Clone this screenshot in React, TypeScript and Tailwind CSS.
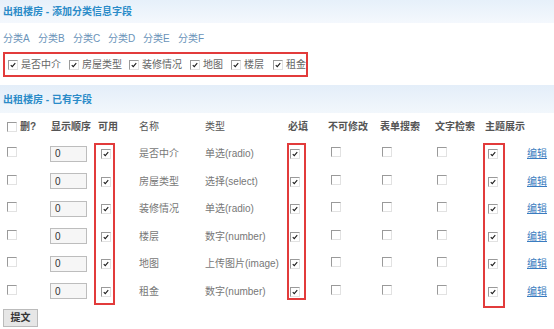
import React from 'react';

const FONT = { fontFamily: '"Liberation Sans", "Noto Sans CJK SC", sans-serif' };

const categories = ['分类A', '分类B', '分类C', '分类D', '分类E', '分类F'];
const addFields = ['是否中介', '房屋类型', '装修情况', '地图', '楼层', '租金'];

const rows = [
  { name: '是否中介', type: '单选(radio)' },
  { name: '房屋类型', type: '选择(select)' },
  { name: '装修情况', type: '单选(radio)' },
  { name: '楼层', type: '数字(number)' },
  { name: '地图', type: '上传图片(image)' },
  { name: '租金', type: '数字(number)' },
];

const Box = ({ checked = false, className = '' }: { checked?: boolean; className?: string }) => (
  <span
    className={`inline-flex items-center justify-center w-[10px] h-[10px] bg-white border border-t-[#9a9a9a] border-l-[#9a9a9a] border-r-[#e2e2e2] border-b-[#e2e2e2] shrink-0 ${className}`}
  >
    {checked && (
      <svg viewBox="0 0 8 8" className="w-[6px] h-[6px]">
        <path d="M1 4.2 L3 6.2 L7 1.5" fill="none" stroke="#1a1a1a" strokeWidth="1.4" />
      </svg>
    )}
  </span>
);

const cols = 'grid grid-cols-[44px_47px_41px_66px_83px_40px_52px_55px_50px_42px_1fr] items-center';

export default function App() {
  return (
    <div className="w-[554px] h-[329px] bg-white overflow-hidden text-[10px]" style={FONT}>
      <div className="h-[23px] bg-gradient-to-b from-[#e6f0fa] to-[#f4f8fd] pl-[3px] pt-[4px] font-bold text-[#2a8bc8]">
        出租楼房 - 添加分类信息字段
      </div>

      <div className="flex gap-[10px] pl-[3px] pt-[8px] h-[29px] text-[#6a93b9]">
        {categories.map((c) => (
          <span key={c} className="w-[25px] whitespace-nowrap">{c}</span>
        ))}
      </div>

      <div className="ml-[3px] w-[305px] h-[25px] border-2 border-[#e23b3b] flex items-center pl-[3px] text-[#666]">
        {addFields.map((f, i) => (
          <span key={f} className={`flex items-center gap-[3px] ${['w-[61px]', 'w-[60px]', 'w-[61px]', 'w-[41px]', 'w-[42px]', ''][i]}`}>
            <Box checked />
            <span>{f}</span>
          </span>
        ))}
      </div>

      <div className="mt-[6px] h-[30px] border-t-2 border-white bg-gradient-to-b from-[#e4eef9] to-[#f2f7fc] pl-[3px] pt-[7px] font-bold text-[#2a8bc8]">
        出租楼房 - 已有字段
      </div>

      <div className={`${cols} h-[27px] pl-[7px] font-bold text-[#555]`}>
        <span className="flex items-center gap-[3px]">
          <Box />
          删?
        </span>
        <span>显示顺序</span>
        <span>可用</span>
        <span className="font-normal text-[#555]">名称</span>
        <span className="font-normal text-[#555]">类型</span>
        <span>必填</span>
        <span>不可修改</span>
        <span>表单搜索</span>
        <span>文字检索</span>
        <span>主题展示</span>
        <span></span>
      </div>

      <div className="relative">
        {rows.map((r) => (
          <div key={r.name} className={`${cols} h-[27.5px] pl-[7px] text-[#777]`}>
            <span><Box /></span>
            <span>
              <span className="flex items-center w-[37px] h-[16px] -ml-[1px] border border-[#bdbdbd] bg-[#f6f6f6] pl-[4px] text-[#333]">0</span>
            </span>
            <span className="pl-[3px]"><Box checked /></span>
            <span>{r.name}</span>
            <span className="whitespace-nowrap">{r.type}</span>
            <span className="pl-[2px]"><Box checked /></span>
            <span className="pl-[3px]"><Box /></span>
            <span className="pl-[2px]"><Box /></span>
            <span className="pl-[2px]"><Box /></span>
            <span className="pl-[3px]"><Box checked /></span>
            <span className="text-[#3a7cc0] underline">编辑</span>
          </div>
        ))}

        <div className="absolute left-[94px] top-[3px] w-[21px] h-[162px] border-2 border-[#e23b3b]" />
        <div className="absolute left-[287px] top-[3px] w-[19px] h-[157px] border-2 border-[#e23b3b]" />
        <div className="absolute left-[483px] top-[3px] w-[22px] h-[165px] border-2 border-[#e23b3b]" />

        <button className="ml-[3px] mt-[4px] w-[35px] h-[18px] bg-[#e6e6e6] border border-[#bbbbbb] text-[#333] text-[10px] font-bold leading-none">
          提文
        </button>
      </div>
    </div>
  );
}
